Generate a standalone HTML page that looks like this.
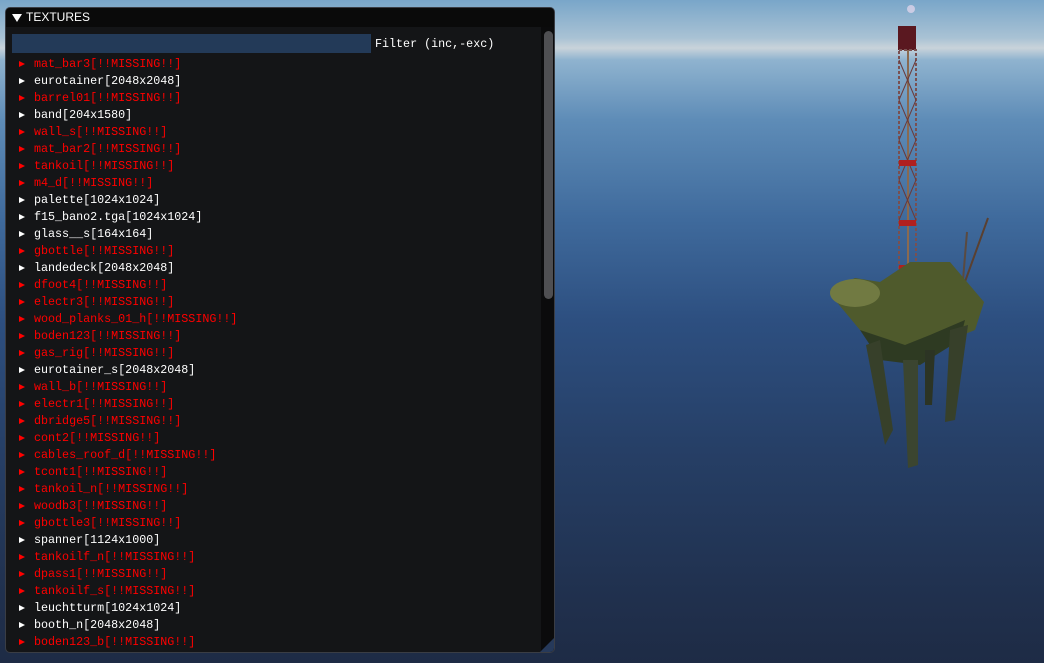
<!DOCTYPE html>
<html><head><style>
html,body{margin:0;padding:0}
body{width:1044px;height:663px;overflow:hidden;position:relative;
background:linear-gradient(to bottom,#79a6c9 0px,#a9c2d4 38px,#c9d3da 48px,#8fb3cf 60px,#5e8cb7 120px,#3f6a9c 220px,#2d4f80 320px,#263f66 450px,#20304d 600px,#1e2b45 663px);
font-family:"Liberation Mono",monospace;}
.win{position:absolute;left:5px;top:7px;width:550px;height:646px;background:#141517;border:1px solid #3a3d44;border-radius:5px;overflow:hidden;box-sizing:border-box}
.title{height:19px;background:#0a0a0a;color:#fff;font-family:"Liberation Sans",sans-serif;font-size:12px;line-height:19px;padding-left:20px;position:relative}
.title:before{content:"";position:absolute;left:6px;top:6px;border-left:5px solid transparent;border-right:5px solid transparent;border-top:8px solid #fff}
.filter{position:absolute;left:6px;top:26px;width:359px;height:19px;background:#233a58}
.flabel{position:absolute;left:369px;top:29px;color:#fff;font-size:11.7px}
.rows{position:absolute;left:12px;top:48px}
.r{height:17px;line-height:17px;font-size:11.7px;color:#fff;white-space:pre;position:relative;padding-left:16px}
.r:before{content:"";position:absolute;left:1px;top:5px;border-top:3.5px solid transparent;border-bottom:3.5px solid transparent;border-left:6px solid #fff}
.m{color:#f00}.m:before{border-left-color:#f00}
.sb{position:absolute;left:535px;top:19px;width:15px;height:627px;background:#0b0b0c}
.th{position:absolute;left:538px;top:23px;width:9px;height:268px;background:#4f4f52;border-radius:5px}
.grip{position:absolute;right:0;bottom:0;width:0;height:0;border-left:14px solid transparent;border-bottom:14px solid #26395a}
</style></head><body>
<svg style="position:absolute;left:0;top:0" width="1044" height="663">
<circle cx="911" cy="9" r="4" fill="#e8d8ee" opacity=".7"/>
<g>
<rect x="898" y="26" width="18" height="24" fill="#5a1820"/>
<rect x="899" y="50" width="17" height="240" fill="none" stroke="#7a5050" stroke-width="2" stroke-dasharray="3 2"/>
<line x1="908" y1="50" x2="908" y2="300" stroke="#8a6a50" stroke-width="2"/>
<path d="M899 60 L916 100 M916 60 L899 100 M899 100 L916 140 M916 100 L899 140 M899 140 L916 180 M916 140 L899 180 M899 180 L916 220 M916 180 L899 220" stroke="#6a3a3a" stroke-width="1"/>
<rect x="899" y="160" width="17" height="6" fill="#b02020"/>
<rect x="899" y="220" width="17" height="6" fill="#b02020"/>
<rect x="899" y="265" width="17" height="6" fill="#b02020"/>
<line x1="962" y1="290" x2="988" y2="218" stroke="#5a4030" stroke-width="2"/>
<line x1="963" y1="280" x2="967" y2="232" stroke="#5a4a40" stroke-width="2"/>
<polygon points="830,290 855,278 880,282 910,262 950,262 984,302 975,330 950,340 910,355 880,350 860,330 835,300" fill="#4f5a2c"/>
<ellipse cx="855" cy="293" rx="25" ry="14" fill="#717a42"/>
<polygon points="860,330 905,345 930,335 965,320 960,340 920,365 880,360" fill="#2e3a22"/>
<polygon points="866,345 880,340 893,430 885,445" fill="#37402a"/>
<polygon points="903,360 918,360 918,465 908,468" fill="#3b4530"/>
<polygon points="950,330 968,325 955,420 945,422" fill="#37402a"/>
<polygon points="925,350 935,350 932,405 925,405" fill="#2c3424"/>
</g>
</svg>
<div class="win">
<div class="title">TEXTURES</div>
<div class="filter"></div>
<div class="flabel">Filter (inc,-exc)</div>
<div class="rows">
<div class="r m">mat_bar3[!!MISSING!!]</div>
<div class="r">eurotainer[2048x2048]</div>
<div class="r m">barrel01[!!MISSING!!]</div>
<div class="r">band[204x1580]</div>
<div class="r m">wall_s[!!MISSING!!]</div>
<div class="r m">mat_bar2[!!MISSING!!]</div>
<div class="r m">tankoil[!!MISSING!!]</div>
<div class="r m">m4_d[!!MISSING!!]</div>
<div class="r">palette[1024x1024]</div>
<div class="r">f15_bano2.tga[1024x1024]</div>
<div class="r">glass__s[164x164]</div>
<div class="r m">gbottle[!!MISSING!!]</div>
<div class="r">landedeck[2048x2048]</div>
<div class="r m">dfoot4[!!MISSING!!]</div>
<div class="r m">electr3[!!MISSING!!]</div>
<div class="r m">wood_planks_01_h[!!MISSING!!]</div>
<div class="r m">boden123[!!MISSING!!]</div>
<div class="r m">gas_rig[!!MISSING!!]</div>
<div class="r">eurotainer_s[2048x2048]</div>
<div class="r m">wall_b[!!MISSING!!]</div>
<div class="r m">electr1[!!MISSING!!]</div>
<div class="r m">dbridge5[!!MISSING!!]</div>
<div class="r m">cont2[!!MISSING!!]</div>
<div class="r m">cables_roof_d[!!MISSING!!]</div>
<div class="r m">tcont1[!!MISSING!!]</div>
<div class="r m">tankoil_n[!!MISSING!!]</div>
<div class="r m">woodb3[!!MISSING!!]</div>
<div class="r m">gbottle3[!!MISSING!!]</div>
<div class="r">spanner[1124x1000]</div>
<div class="r m">tankoilf_n[!!MISSING!!]</div>
<div class="r m">dpass1[!!MISSING!!]</div>
<div class="r m">tankoilf_s[!!MISSING!!]</div>
<div class="r">leuchtturm[1024x1024]</div>
<div class="r">booth_n[2048x2048]</div>
<div class="r m">boden123_b[!!MISSING!!]</div>
</div>
<div class="sb"></div>
<div class="th"></div>
<div class="grip"></div>
</div>
</body></html>
